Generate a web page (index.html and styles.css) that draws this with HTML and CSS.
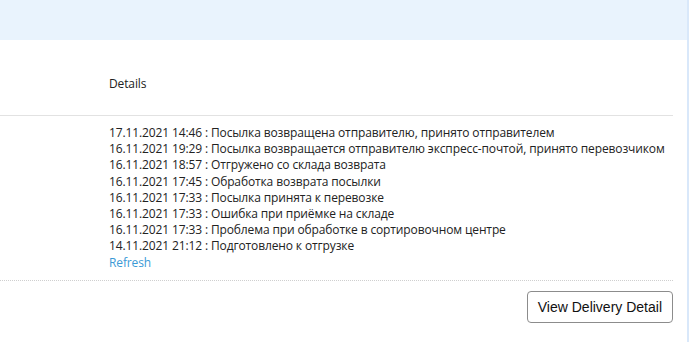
FILE: index.html
```html
<!DOCTYPE html>
<html>
<head>
<meta charset="utf-8">
<link rel="stylesheet" href="styles.css">
</head>
<body>
<div class="page">
  <div class="main">
    <div class="band"></div>
    <div class="content">
      <div class="head-row">
        <div class="cell-empty"></div>
        <div class="cell-head">Details</div>
      </div>
      <div class="body-row">
        <div class="cell-empty"></div>
        <div class="cell-body">
          <div class="line">17.11.2021 14:46 : Посылка возвращена отправителю, принято отправителем</div>
          <div class="line">16.11.2021 19:29 : Посылка возвращается отправителю экспресс-почтой, принято перевозчиком</div>
          <div class="line">16.11.2021 18:57 : Отгружено со склада возврата</div>
          <div class="line">16.11.2021 17:45 : Обработка возврата посылки</div>
          <div class="line">16.11.2021 17:33 : Посылка принята к перевозке</div>
          <div class="line">16.11.2021 17:33 : Ошибка при приёмке на складе</div>
          <div class="line">16.11.2021 17:33 : Проблема при обработке в сортировочном центре</div>
          <div class="line">14.11.2021 21:12 : Подготовлено к отгрузке</div>
          <a class="refresh" href="#">Refresh</a>
        </div>
      </div>
      <div class="actions">
        <button class="btn">View Delivery Detail</button>
      </div>
    </div>
  </div>
  <div class="edge"></div>
</div>
</body>
</html>
```

FILE: styles.css
```css
html, body {
  margin: 0;
  padding: 0;
  background: #ffffff;
}
.page {
  display: flex;
  height: 342px;
}
.main {
  width: 687px;
  display: flex;
  flex-direction: column;
}
.edge {
  width: 2px;
  background: #d9e8fa;
}
.band {
  height: 40px;
  background: #e9f3fd;
}
.content {
  width: 673px;
  font-family: "Open Sans", "Noto Sans", sans-serif;
  font-size: 12px;
  letter-spacing: -0.125px;
  color: #222222;
}
.head-row {
  display: flex;
  height: 75px;
  border-bottom: 1px solid #e2e2e2;
}
.cell-empty {
  width: 109px;
  flex: none;
}
.cell-head {
  padding-top: 35px;
  line-height: 17px;
}
.body-row {
  display: flex;
  padding: 9px 0 9px;
  border-bottom: 1px dotted #cfcfcf;
}
.line {
  line-height: 16.2px;
  white-space: nowrap;
}
.refresh {
  display: block;
  line-height: 16px;
  color: #3b9ad6;
  text-decoration: none;
}
.actions {
  display: flex;
  justify-content: flex-end;
  padding-top: 10px;
}
.btn {
  font-family: "Liberation Sans", Arial, sans-serif;
  font-size: 14px;
  color: #111111;
  background: #ffffff;
  border: 1px solid #8c8c8c;
  border-radius: 4px;
  height: 32px;
  padding: 0 10px;
}
```
